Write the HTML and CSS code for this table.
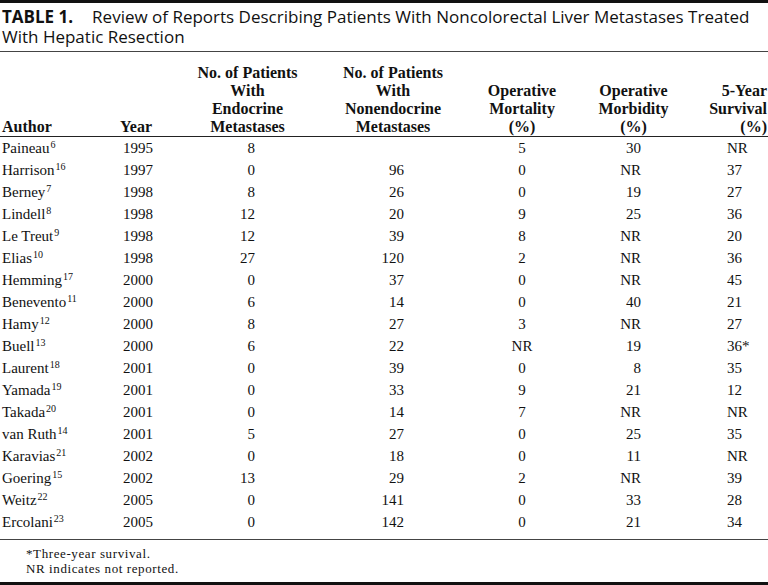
FILE: index.html
```html
<!DOCTYPE html>
<html>
<head>
<meta charset="utf-8">
<link rel="stylesheet" href="styles.css">
</head>
<body>
<div class="page">
  <div class="caption"><span class="label">TABLE 1.</span>Review of Reports Describing Patients With Noncolorectal Liver Metastases Treated With Hepatic Resection</div>
  <table class="tbl">
    <colgroup>
      <col class="c-author"><col class="c-year"><col class="c-endo"><col class="c-nonendo"><col class="c-mort"><col class="c-morb"><col class="c-surv">
    </colgroup>
    <thead>
      <tr>
        <th class="h-left">Author</th>
        <th class="h-year">Year</th>
        <th>No. of Patients<br>With<br>Endocrine<br>Metastases</th>
        <th>No. of Patients<br>With<br>Nonendocrine<br>Metastases</th>
        <th>Operative<br>Mortality<br>(%)</th>
        <th>Operative<br>Morbidity<br>(%)</th>
        <th class="h-surv">5-Year<br>Survival<br>(%)</th>
      </tr>
    </thead>
    <tbody>
      <tr><td class="a">Paineau<sup>6</sup></td><td class="y">1995</td><td class="e">8</td><td class="n"></td><td class="m">5</td><td class="mb">30</td><td class="s">NR</td></tr>
      <tr><td class="a">Harrison<sup>16</sup></td><td class="y">1997</td><td class="e">0</td><td class="n">96</td><td class="m">0</td><td class="mb">NR</td><td class="s">37</td></tr>
      <tr><td class="a">Berney<sup>7</sup></td><td class="y">1998</td><td class="e">8</td><td class="n">26</td><td class="m">0</td><td class="mb">19</td><td class="s">27</td></tr>
      <tr><td class="a">Lindell<sup>8</sup></td><td class="y">1998</td><td class="e">12</td><td class="n">20</td><td class="m">9</td><td class="mb">25</td><td class="s">36</td></tr>
      <tr><td class="a">Le Treut<sup>9</sup></td><td class="y">1998</td><td class="e">12</td><td class="n">39</td><td class="m">8</td><td class="mb">NR</td><td class="s">20</td></tr>
      <tr><td class="a">Elias<sup>10</sup></td><td class="y">1998</td><td class="e">27</td><td class="n">120</td><td class="m">2</td><td class="mb">NR</td><td class="s">36</td></tr>
      <tr><td class="a">Hemming<sup>17</sup></td><td class="y">2000</td><td class="e">0</td><td class="n">37</td><td class="m">0</td><td class="mb">NR</td><td class="s">45</td></tr>
      <tr><td class="a">Benevento<sup>11</sup></td><td class="y">2000</td><td class="e">6</td><td class="n">14</td><td class="m">0</td><td class="mb">40</td><td class="s">21</td></tr>
      <tr><td class="a">Hamy<sup>12</sup></td><td class="y">2000</td><td class="e">8</td><td class="n">27</td><td class="m">3</td><td class="mb">NR</td><td class="s">27</td></tr>
      <tr><td class="a">Buell<sup>13</sup></td><td class="y">2000</td><td class="e">6</td><td class="n">22</td><td class="m">NR</td><td class="mb">19</td><td class="s">36*</td></tr>
      <tr><td class="a">Laurent<sup>18</sup></td><td class="y">2001</td><td class="e">0</td><td class="n">39</td><td class="m">0</td><td class="mb">8</td><td class="s">35</td></tr>
      <tr><td class="a">Yamada<sup>19</sup></td><td class="y">2001</td><td class="e">0</td><td class="n">33</td><td class="m">9</td><td class="mb">21</td><td class="s">12</td></tr>
      <tr><td class="a">Takada<sup>20</sup></td><td class="y">2001</td><td class="e">0</td><td class="n">14</td><td class="m">7</td><td class="mb">NR</td><td class="s">NR</td></tr>
      <tr><td class="a">van Ruth<sup>14</sup></td><td class="y">2001</td><td class="e">5</td><td class="n">27</td><td class="m">0</td><td class="mb">25</td><td class="s">35</td></tr>
      <tr><td class="a">Karavias<sup>21</sup></td><td class="y">2002</td><td class="e">0</td><td class="n">18</td><td class="m">0</td><td class="mb">11</td><td class="s">NR</td></tr>
      <tr><td class="a">Goering<sup>15</sup></td><td class="y">2002</td><td class="e">13</td><td class="n">29</td><td class="m">2</td><td class="mb">NR</td><td class="s">39</td></tr>
      <tr><td class="a">Weitz<sup>22</sup></td><td class="y">2005</td><td class="e">0</td><td class="n">141</td><td class="m">0</td><td class="mb">33</td><td class="s">28</td></tr>
      <tr><td class="a">Ercolani<sup>23</sup></td><td class="y">2005</td><td class="e">0</td><td class="n">142</td><td class="m">0</td><td class="mb">21</td><td class="s">34</td></tr>
    </tbody>
  </table>
  <div class="notes">
    <p>*Three-year survival.</p>
    <p>NR indicates not reported.</p>
  </div>
</div>
</body>
</html>
```
FILE: styles.css
```css
html, body {
  margin: 0;
  padding: 0;
  background: #fff;
}
.page {
  width: 768px;
  height: 585px;
  box-sizing: border-box;
  border-top: 3px solid #111;
  border-bottom: 3px solid #111;
  color: #111;
  overflow: hidden;
}
.caption {
  font-family: "Open Sans", sans-serif;
  font-size: 17px;
  line-height: 20px;
  padding: 4px 4px 4px 2px;
  border-bottom: 1.5px solid #444;
}
.label {
  font-weight: bold;
  margin-right: 19px;
}
.tbl {
  width: 768px;
  border-collapse: collapse;
  table-layout: fixed;
  font-family: "Liberation Serif", serif;
  font-size: 15px;
  border-bottom: 1.5px solid #444;
}
.c-author { width: 120px; }
.c-year { width: 75px; }
.c-endo { width: 105px; }
.c-nonendo { width: 186px; }
.c-mort { width: 72px; }
.c-morb { width: 151px; }
.c-surv { width: 59px; }
.tbl th {
  font-weight: bold;
  font-size: 16px;
  line-height: 18px;
  vertical-align: bottom;
  text-align: center;
  padding: 12px 0 0 0;
  white-space: nowrap;
  border-bottom: 1.5px solid #222;
}
.tbl th.h-left {
  text-align: left;
  padding-left: 2px;
}
.tbl th.h-year {
  text-align: left;
  padding-left: 0;
}
.tbl th.h-surv {
  text-align: right;
  padding-right: 1px;
}
.tbl td {
  padding: 0;
  line-height: 22px;
  height: 22px;
  white-space: nowrap;
}
.tbl tbody tr:last-child td { padding-bottom: 6px; }
.tbl sup {
  font-size: 10px;
  line-height: 0;
  vertical-align: 5px;
  margin-left: 1px;
}
.a { text-align: left; padding-left: 2px !important; }
.y { text-align: left; padding-left: 3px !important; }
.e { text-align: right; padding-right: 45px !important; }
.n { text-align: right; padding-right: 82px !important; }
.m { text-align: center; }
.mb { text-align: right; padding-right: 68px !important; }
.s { text-align: left; padding-left: 18px !important; }
.notes {
  font-family: "Liberation Serif", serif;
  font-size: 13px;
  line-height: 15px;
  letter-spacing: 0.6px;
  padding: 6px 0 0 26px;
}
.notes p {
  margin: 0;
}
```
